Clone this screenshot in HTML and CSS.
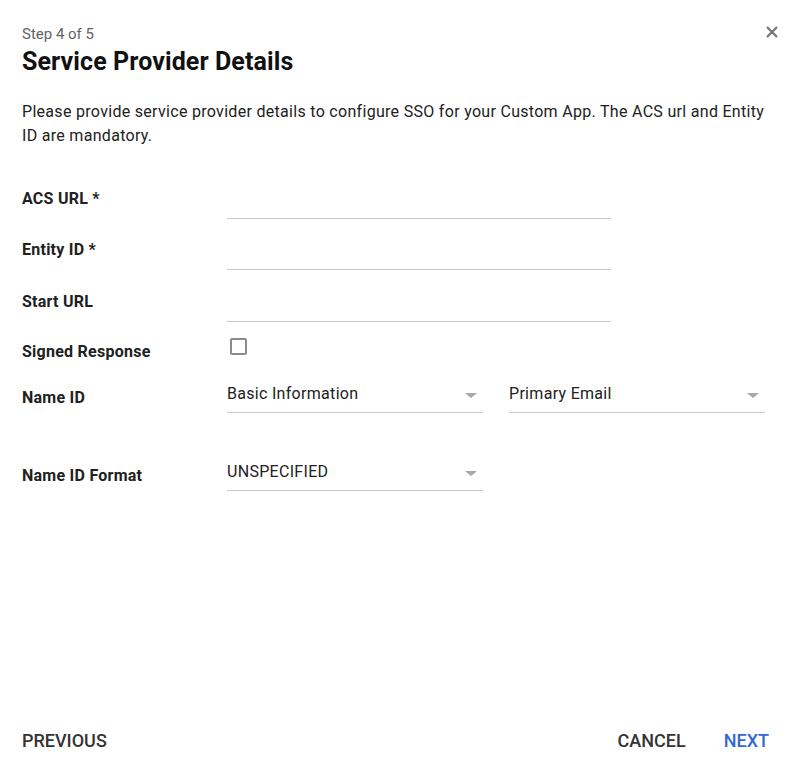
FILE: index.html
```html
<!DOCTYPE html>
<html lang="en">
<head>
<meta charset="utf-8">
<title>Service Provider Details</title>
<link rel="stylesheet" href="styles.css">
</head>
<body>
<div class="dialog">
  <header class="head">
    <div class="step">Step 4 of 5</div>
    <h1 class="title">Service Provider Details</h1>
    <button class="close" aria-label="Close">
      <svg width="12" height="12" viewBox="0 0 12 12"><path d="M1 1L11 11M11 1L1 11" stroke="#757575" stroke-width="2.2" fill="none"/></svg>
    </button>
  </header>
  <p class="intro">Please provide service provider details to configure SSO for your Custom App. The ACS url and Entity ID are mandatory.</p>
  <div class="form">
    <div class="row text-row">
      <div class="label">ACS URL *</div>
      <div class="field text-field"></div>
    </div>
    <div class="row text-row">
      <div class="label">Entity ID *</div>
      <div class="field text-field"></div>
    </div>
    <div class="row text-row">
      <div class="label">Start URL</div>
      <div class="field text-field"></div>
    </div>
    <div class="row check-row">
      <div class="label">Signed Response</div>
      <div class="checkbox"></div>
    </div>
    <div class="row nameid-row">
      <div class="label">Name ID</div>
      <div class="selects">
        <div class="select"><span>Basic Information</span><span class="arrow"></span></div>
        <div class="select"><span>Primary Email</span><span class="arrow"></span></div>
      </div>
    </div>
    <div class="row format-row">
      <div class="label">Name ID Format</div>
      <div class="select"><span>UNSPECIFIED</span><span class="arrow"></span></div>
    </div>
  </div>
  <footer class="foot">
    <button class="btn">PREVIOUS</button>
    <div class="right">
      <button class="btn">CANCEL</button>
      <button class="btn primary">NEXT</button>
    </div>
  </footer>
</div>
</body>
</html>
```

FILE: styles.css
```css
html, body {
  margin: 0;
  padding: 0;
  background: #fff;
}
body {
  font-family: Roboto, "Liberation Sans", Arial, sans-serif;
  color: #212121;
}
.dialog {
  height: 771px;
  box-sizing: border-box;
  padding: 23px 22px 0 22px;
  display: flex;
  flex-direction: column;
  position: relative;
}
.head {
  position: relative;
}
.step {
  font-size: 15px;
  line-height: 22px;
  color: #5f6368;
}
.title {
  margin: 2px 0 0 0;
  font-size: 25px;
  line-height: 30px;
  font-weight: 700;
  letter-spacing: 0.1px;
  color: #111;
}
.close {
  position: absolute;
  right: -6px;
  top: -3px;
  width: 24px;
  height: 24px;
  padding: 0;
  border: 0;
  background: none;
  display: flex;
  align-items: center;
  justify-content: center;
}
.intro {
  margin: 23px 0 0 0;
  font-size: 16px;
  line-height: 24px;
  letter-spacing: 0.3px;
  color: #212121;
}
.form {
  margin-top: 19px;
  display: flex;
  flex-direction: column;
}
.row {
  display: flex;
}
.label {
  width: 205px;
  flex: none;
  font-size: 16px;
  line-height: 20px;
  font-weight: 700;
  letter-spacing: 0.25px;
  color: #212121;
}
.text-row {
  height: 51.5px;
  align-items: flex-end;
}
.text-row .label {
  padding-bottom: 10px;
}
.text-field {
  width: 384px;
  height: 40px;
  box-sizing: border-box;
  border-bottom: 1px solid #c8c8c8;
}
.check-row {
  height: 44px;
}
.check-row .label {
  padding-top: 20px;
}
.checkbox {
  margin-top: 16px;
  margin-left: 3px;
  width: 17px;
  height: 17px;
  box-sizing: border-box;
  border: 2px solid #8a8a8a;
  border-radius: 2px;
}
.nameid-row {
  height: 47px;
}
.nameid-row .label {
  padding-top: 22px;
}
.selects {
  display: flex;
  gap: 26px;
}
.select {
  width: 256px;
  box-sizing: border-box;
  border-bottom: 1px solid #c8c8c8;
  display: flex;
  justify-content: space-between;
  align-items: flex-start;
  font-size: 16px;
  line-height: 20px;
  letter-spacing: 0.3px;
  color: #212121;
}
.nameid-row .select {
  height: 47px;
  padding-top: 18px;
}
.arrow {
  width: 0;
  height: 0;
  border-left: 6px solid transparent;
  border-right: 6px solid transparent;
  border-top: 5px solid #a6a6a6;
  margin-top: 9px;
  margin-right: 6px;
}
.format-row {
  height: 78px;
}
.format-row .label {
  padding-top: 53px;
}
.format-row .select {
  margin-top: 42px;
  height: 36px;
  padding-top: 7px;
}
.foot {
  margin-top: auto;
  padding-bottom: 19px;
  display: flex;
  justify-content: space-between;
  align-items: center;
}
.right {
  display: flex;
  gap: 38px;
  margin-right: 9px;
}
.btn {
  border: 0;
  background: none;
  padding: 0;
  font-family: Roboto, "Liberation Sans", Arial, sans-serif;
  font-size: 18px;
  line-height: 22px;
  font-weight: 500;
  color: #333;
  letter-spacing: 0;
}
.btn.primary {
  color: #3367d6;
}
```
